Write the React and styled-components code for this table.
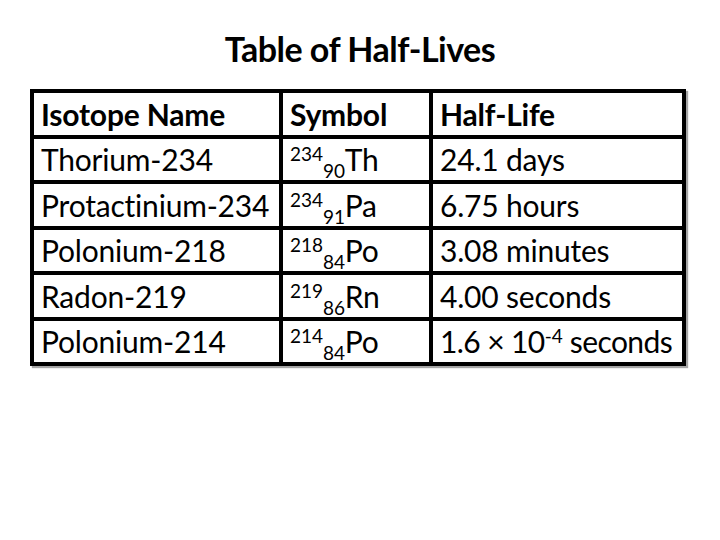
import React from "react";
import styled, { createGlobalStyle } from "styled-components";

const Global = createGlobalStyle`
  html, body { margin: 0; padding: 0; background: #fff; }
  body { width: 720px; height: 540px; overflow: hidden; font-family: Lato, "Liberation Sans", sans-serif; color: #000; }
`;

const Page = styled.div`
  width: 720px;
  height: 540px;
  display: flex;
  flex-direction: column;
  align-items: center;
  padding-top: 29px;
  box-sizing: border-box;
`;

const Title = styled.h1`
  margin: 0 0 20px 0;
  font-size: 34px;
  font-weight: 700;
  line-height: 40px;
  letter-spacing: -0.5px;
`;

const Table = styled.table`
  border-collapse: collapse;
  margin-left: -4px;
  box-shadow: 2px 2px 1px rgba(0, 0, 0, 0.35);
`;

const Row = styled.tr`
  height: 45.5px;
`;

const Cell = styled.td`
  border: 4px solid #000;
  padding: 0 0 0 7px;
  width: ${(p) => p.$w}px;
  font-size: 30px;
  font-weight: ${(p) => (p.$head ? 700 : 400)};
  line-height: 36px;
  letter-spacing: ${(p) => (p.$tight ? "-0.6px" : "-0.2px")};
  white-space: nowrap;
  vertical-align: middle;
  box-sizing: border-box;
`;

const Sup = styled.sup`
  font-size: 19px;
  line-height: 0;
  vertical-align: 10px;
  letter-spacing: 0;
`;

const Sub = styled.sub`
  font-size: 19px;
  line-height: 0;
  vertical-align: -7px;
`;

const widths = [249, 150, 253];

const rows = [
  ["Thorium-234", ["234", "90", "Th"], "24.1 days"],
  ["Protactinium-234", ["234", "91", "Pa"], "6.75 hours"],
  ["Polonium-218", ["218", "84", "Po"], "3.08 minutes"],
  ["Radon-219", ["219", "86", "Rn"], "4.00 seconds"],
  ["Polonium-214", ["214", "84", "Po"], null],
];

export default function App() {
  return (
    <>
      <Global />
      <Page>
        <Title>Table of Half-Lives</Title>
        <Table>
          <tbody>
            <Row>
              <Cell $head $w={widths[0]}>Isotope Name</Cell>
              <Cell $head $w={widths[1]}>Symbol</Cell>
              <Cell $head $w={widths[2]}>Half-Life</Cell>
            </Row>
            {rows.map(([name, [a, z, s], life]) => (
              <Row key={name}>
                <Cell $w={widths[0]}>{name}</Cell>
                <Cell $w={widths[1]}>
                  <Sup>{a}</Sup>
                  <Sub>{z}</Sub>
                  {s}
                </Cell>
                {life ? (
                  <Cell $w={widths[2]}>{life}</Cell>
                ) : (
                  <Cell $w={widths[2]} $tight>
                    1.6 × 10<Sup>-4</Sup> seconds
                  </Cell>
                )}
              </Row>
            ))}
          </tbody>
        </Table>
      </Page>
    </>
  );
}
